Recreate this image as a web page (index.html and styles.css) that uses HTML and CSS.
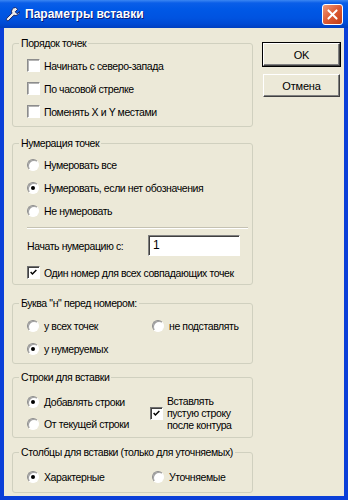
FILE: index.html
```html
<!DOCTYPE html>
<html lang="ru">
<head>
  <meta charset="UTF-8">
  <title>Параметры вставки</title>
  <link rel="stylesheet" href="styles.css">
</head>
<body>

<div class="window">
  <div class="titlebar">
    <svg class="title-icon" viewBox="0 0 16 16">
      <path d="M10.5 1.5a4 4 0 0 0-3.6 5.7L1.8 12.3a1.4 1.4 0 0 0 2 2l5.1-5.1A4 4 0 0 0 14.5 5.5l-2.3 2.3-2-2 2.3-2.3a4 4 0 0 0-2-2z" fill="#ececec" stroke="#14246a" stroke-width="1"/>
    </svg>
    <span class="title-text">Параметры вставки</span>
    <span class="close-btn">
      <svg viewBox="0 0 21 21"><path d="M6 6l9 9M15 6l-9 9" stroke="#fff" stroke-width="2.2" stroke-linecap="round"/></svg>
    </span>
  </div>

  <div class="frame">
    <div class="client">
      <div class="groups">

        <fieldset class="group group-order">
          <legend>Порядок точек</legend>
          <label class="row"><span class="check"></span>Начинать с северо-запада</label>
          <label class="row"><span class="check"></span>По часовой стрелке</label>
          <label class="row"><span class="check"></span>Поменять X и Y местами</label>
        </fieldset>

        <fieldset class="group group-numbering">
          <legend>Нумерация точек</legend>
          <label class="row"><span class="radio"></span>Нумеровать все</label>
          <label class="row"><span class="radio on"></span>Нумеровать, если нет обозначения</label>
          <label class="row"><span class="radio"></span>Не нумеровать</label>
          <div class="separator"></div>
          <div class="start-row">
            <span class="start-label">Начать нумерацию с:</span>
            <span class="textbox">1</span>
          </div>
          <label class="row row-last">
            <span class="check on">
              <svg viewBox="0 0 11 11"><path d="M2 5l2.2 2.3L9 2.5" fill="none" stroke="#000" stroke-width="1.8"/></svg>
            </span>Один номер для всех совпадающих точек
          </label>
        </fieldset>

        <fieldset class="group group-letter">
          <legend>Буква "н" перед номером:</legend>
          <div class="grid2">
            <label class="row"><span class="radio"></span>у всех точек</label>
            <label class="row"><span class="radio"></span>не подставлять</label>
            <label class="row"><span class="radio on"></span>у нумеруемых</label>
          </div>
        </fieldset>

        <fieldset class="group group-lines">
          <legend>Строки для вставки</legend>
          <div class="lines-body">
            <div class="col">
              <label class="row row-short"><span class="radio on"></span>Добавлять строки</label>
              <label class="row row-short"><span class="radio"></span>От текущей строки</label>
            </div>
            <label class="multi">
              <span class="check on">
                <svg viewBox="0 0 11 11"><path d="M2 5l2.2 2.3L9 2.5" fill="none" stroke="#000" stroke-width="1.8"/></svg>
              </span>
              <span class="multi-text">Вставлять<br>пустую строку<br>после контура</span>
            </label>
          </div>
        </fieldset>

        <fieldset class="group group-columns">
          <legend>Столбцы для вставки (только для уточняемых)</legend>
          <div class="grid2">
            <label class="row row-short"><span class="radio on"></span>Характерные</label>
            <label class="row row-short"><span class="radio"></span>Уточняемые</label>
          </div>
        </fieldset>

      </div>

      <div class="buttons">
        <button type="button" class="btn btn-default">OK</button>
        <button type="button" class="btn">Отмена</button>
      </div>
    </div>
  </div>
</div>

</body>
</html>
```

FILE: styles.css
```css
body {
  margin: 0;
  font-family: "Liberation Sans", Arial, sans-serif;
  font-size: 10.5px;
  letter-spacing: -0.4px;
  color: #000;
  background: #fff;
}

.window {
  width: 348px;
  height: 500px;
  display: flex;
  flex-direction: column;
}

/* title bar */
.titlebar {
  height: 28px;
  flex: none;
  display: flex;
  align-items: center;
  padding: 0 5px;
  background: linear-gradient(#3b86f2 0, #0a5ee8 3px, #0058e6 9px, #0053e0 18px, #0049d3 24px, #003fbf 28px);
  position: relative;
}
.title-icon {
  width: 16px;
  height: 16px;
  margin-right: 4px;
}
.title-text {
  color: #fff;
  font-weight: bold;
  font-size: 12px;
  letter-spacing: 0;
  text-shadow: 1px 1px 0 #0a1b78;
}
.close-btn {
  position: absolute;
  left: 322px;
  top: 4px;
  width: 19px;
  height: 19px;
  border: 1px solid #fff;
  border-radius: 3px;
  background: linear-gradient(135deg, #f09a7a, #dd5a33 50%, #c13d16);
}
.close-btn svg {
  width: 19px;
  height: 19px;
  display: block;
}

/* window body */
.frame {
  flex: 1;
  display: flex;
  border: 4px solid #0a3fd8;
  border-top: none;
  box-shadow: inset 1px 0 #06237f, inset -1px 0 #06237f;
}
.client {
  flex: 1;
  display: flex;
  background: #ece9d8;
  padding: 0 4px 0 8px;
}

.groups {
  width: 241px;
  display: flex;
  flex-direction: column;
}

.group {
  margin: 0;
  padding: 0 0 0 14px;
  border: 1px solid #d0d0bf;
  border-radius: 3px;
  min-inline-size: 0;
}
.group legend {
  line-height: 13px;
  padding: 0 2px;
  margin-left: -8px;
  white-space: nowrap;
}

.group-order { margin-top: 9px; padding-top: 4px; padding-bottom: 3px; }
.group-numbering { margin-top: 10px; padding-top: 3px; }
.group-letter { margin-top: 12px; padding-top: 4px; padding-bottom: 3px; }
.group-lines { margin-top: 7px; padding-top: 7px; padding-bottom: 2px; }
.group-columns { margin-top: 8px; padding-top: 7px; padding-bottom: 4px; }

.row {
  display: flex;
  align-items: center;
  height: 23px;
  white-space: nowrap;
}
.row-short {
  height: 22px;
}

.check {
  width: 11px;
  height: 11px;
  flex: none;
  margin-right: 4px;
  background: #fff;
  border: 1px solid;
  border-color: #8c8c8c #fff #fff #8c8c8c;
  box-shadow: inset 1px 1px #b4b4b4;
  display: flex;
  align-items: center;
  justify-content: center;
}
.check.on {
  border-color: #707070 #fff #fff #707070;
  box-shadow: inset 1px 1px #404040;
}
.check svg {
  width: 9px;
  height: 9px;
}

.radio {
  width: 10px;
  height: 10px;
  flex: none;
  margin-right: 5px;
  background: #fff;
  border: 1px solid;
  border-color: #8c8c8c #fff #fff #8c8c8c;
  border-radius: 50%;
  box-shadow: inset 1px 1px #a0a0a0;
  display: flex;
  align-items: center;
  justify-content: center;
}
.radio.on::after {
  content: "";
  width: 4px;
  height: 4px;
  border-radius: 50%;
  background: #000;
}

.separator {
  margin: 5px 4px 0 0;
  border-top: 1px solid #c5c2b2;
  border-bottom: 1px solid #fff;
}

.start-row {
  display: flex;
  align-items: center;
  margin-top: 6px;
  height: 21px;
}
.start-label {
  width: 121px;
}
.textbox {
  width: 86px;
  height: 19px;
  padding-left: 4px;
  background: #fff;
  border: 1px solid;
  border-color: #808080 #fff #fff #808080;
  box-shadow: inset 1px 1px #404040;
  font-size: 12px;
  letter-spacing: 0;
  line-height: 19px;
}
.row-last {
  margin-top: 5px;
}

.grid2 {
  display: grid;
  grid-template-columns: 125px auto;
}

.lines-body {
  display: flex;
}
.lines-body .col {
  width: 123px;
}
.multi {
  display: flex;
  align-items: center;
}
.multi-text {
  line-height: 12px;
}

/* buttons */
.buttons {
  margin-left: 10px;
  padding-top: 15px;
  display: flex;
  flex-direction: column;
  gap: 8px;
}
.btn {
  width: 77px;
  height: 23px;
  padding: 0;
  font-family: "Liberation Sans", Arial, sans-serif;
  font-size: 11px;
  letter-spacing: -0.2px;
  color: #000;
  background: #ece9d8;
  border: 1px solid;
  border-color: #fff #404040 #404040 #fff;
  box-shadow: inset -1px -1px #808080;
}
.btn-default {
  outline: 1px solid #000;
  outline-offset: 0;
}
```
